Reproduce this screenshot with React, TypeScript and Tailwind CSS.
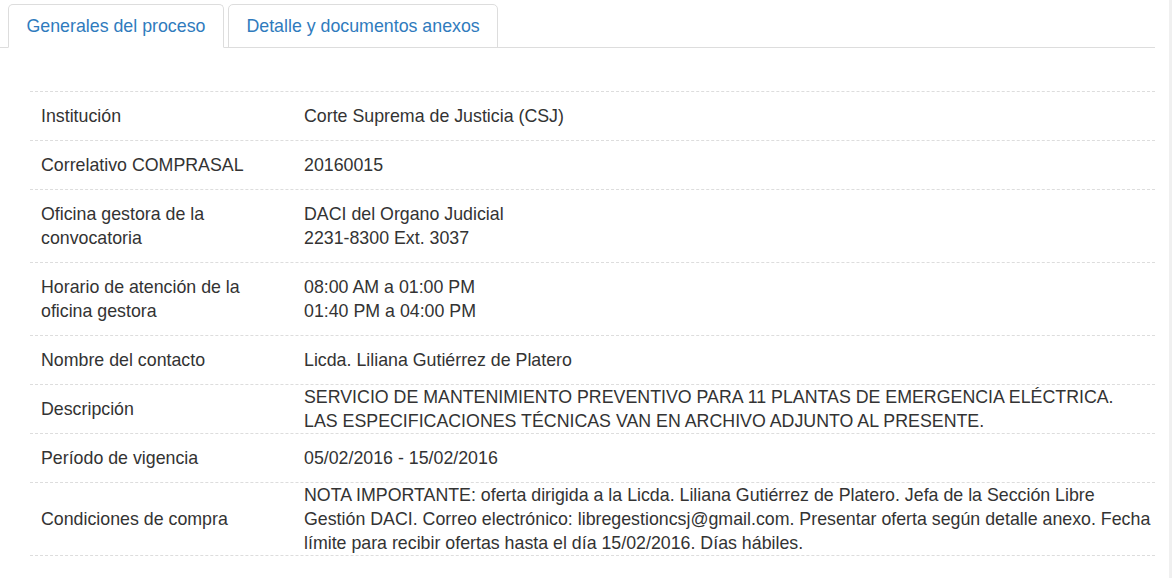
import type {JSX, ReactNode} from 'react';

interface Row {
    label: string;
    value: ReactNode;
    tight?: boolean;
}

const rows: Row[] = [
    {label: "Institución", value: "Corte Suprema de Justicia (CSJ)"},
    {label: "Correlativo COMPRASAL", value: "20160015"},
    {label: "Oficina gestora de la convocatoria", value: <>DACI del Organo Judicial<br/>2231-8300 Ext. 3037</>},
    {label: "Horario de atención de la oficina gestora", value: <>08:00 AM a 01:00 PM<br/>01:40 PM a 04:00 PM</>},
    {label: "Nombre del contacto", value: "Licda. Liliana Gutiérrez de Platero"},
    {
        label: "Descripción",
        value: <>SERVICIO DE MANTENIMIENTO PREVENTIVO PARA 11 PLANTAS DE EMERGENCIA ELÉCTRICA.<br/>LAS ESPECIFICACIONES TÉCNICAS VAN EN ARCHIVO ADJUNTO AL PRESENTE.</>,
        tight: true
    },
    {label: "Período de vigencia", value: "05/02/2016 - 15/02/2016"},
    {
        label: "Condiciones de compra",
        value: "NOTA IMPORTANTE: oferta dirigida a la Licda. Liliana Gutiérrez de Platero. Jefa de la Sección Libre Gestión DACI. Correo electrónico: libregestioncsj@gmail.com. Presentar oferta según detalle anexo. Fecha límite para recibir ofertas hasta el día 15/02/2016. Días hábiles.",
        tight: true
    },
];

function Tab({label, active}: { label: string; active?: boolean }): JSX.Element {
    return (
        <div
            className={`-mb-px flex h-[44px] items-center rounded-t-[5px] border border-[#ddd] px-[17.5px] text-[#2f7bbd] ${active ? "border-b-white bg-white" : "border-b-[#ddd]"}`}>
            {label}
        </div>
    );
}

function App(): JSX.Element {
    return (
        <div
            className="flex h-[578px] w-[1172px] overflow-hidden bg-white font-['Liberation_Sans',Arial,sans-serif] text-[17.8px] leading-[24px] text-[#333]">
            <div className="w-[1169px]">
                <div className="flex h-[48px] w-[1155px] items-end gap-[4px] border-b border-[#ddd] pl-[8px]">
                    <Tab label="Generales del proceso" active/>
                    <Tab label="Detalle y documentos anexos"/>
                </div>
                <div className="w-[1155px] pl-[30px] pt-[43px]">
                    <div className="border-t border-dashed border-[#ddd]">
                        {rows.map((row) => (
                            <div key={row.label} className="flex items-center border-b border-dashed border-[#ddd]">
                                <div className="w-[262px] shrink-0 px-[11px] py-3">{row.label}</div>
                                <div className={`flex-1 pl-3 ${row.tight ? "py-0" : "py-3"}`}>{row.value}</div>
                            </div>
                        ))}
                    </div>
                </div>
            </div>
            <div className="w-[3px] bg-[#f0f0f0]"/>
        </div>
    );
}

export default App;
